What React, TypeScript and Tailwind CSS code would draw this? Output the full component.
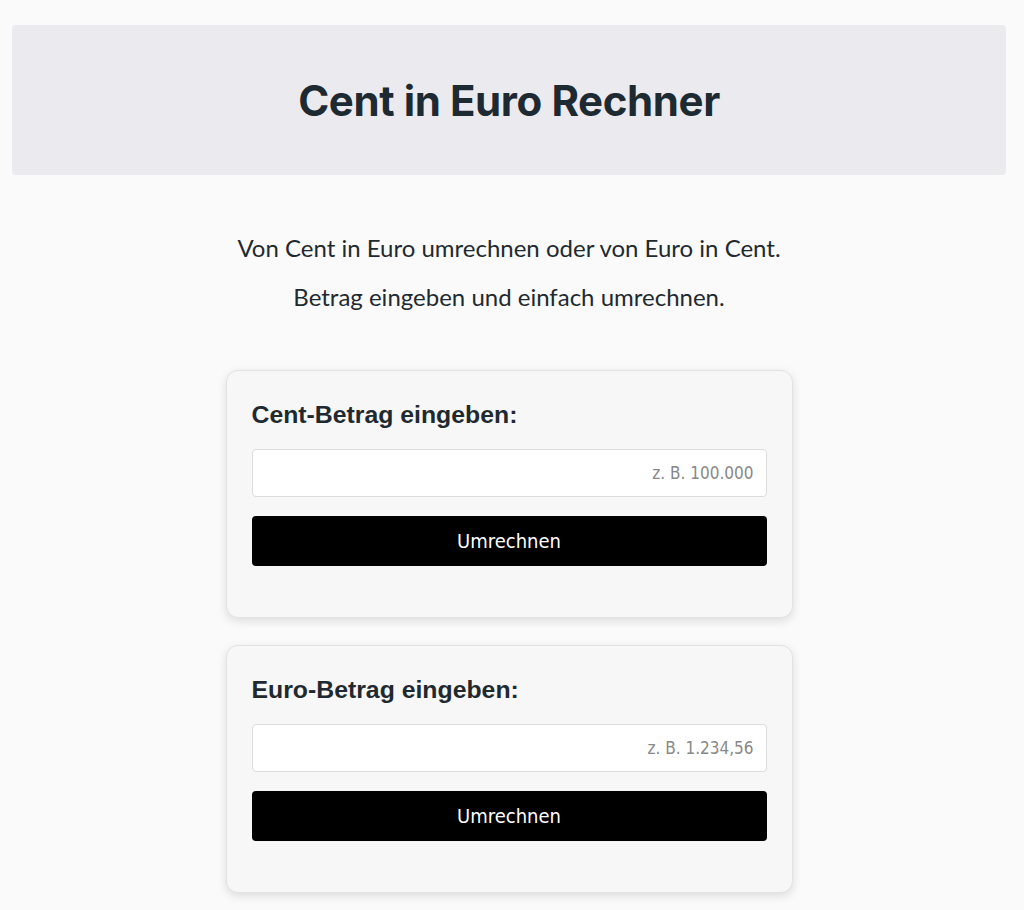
import React, { useState } from "react";

const ConverterCard: React.FC<{
  label: string;
  placeholder: string;
}> = ({ label, placeholder }) => {
  const [value, setValue] = useState("");

  return (
    <div className="w-[567px] rounded-xl border border-[#e2e2e2] bg-[#f7f7f7] px-[25px] pt-[29px] pb-[51px] shadow-[0_3px_10px_rgba(0,0,0,0.12)]">
      <h2 className="font-['Liberation_Sans',Arial,sans-serif] text-[24.8px] font-bold leading-[30px] text-[#1f2a30]">
        {label}
      </h2>
      <input
        type="text"
        value={value}
        onChange={(e) => setValue(e.target.value)}
        placeholder={placeholder}
        className="mt-[19px] block h-[48px] w-full rounded-[4px] border border-[#dcdcdc] bg-white px-3 text-right font-['DejaVu_Sans_Condensed','DejaVu_Sans',Tahoma,sans-serif] text-[17px] text-[#222] placeholder:text-[#888] focus:outline-none"
      />
      <button className="mt-[19px] block h-[50px] w-full rounded-[4px] bg-black font-['DejaVu_Sans_Condensed','DejaVu_Sans',Tahoma,sans-serif] text-[20px] text-white">
        Umrechnen
      </button>
    </div>
  );
};

export default function App() {
  return (
    <div className="min-h-[910px] bg-[#fafafa] pl-3 pr-[18px] pt-[25px] pb-10">
      {/* Header */}
      <div className="flex h-[150px] items-center justify-center rounded-[4px] bg-[#ebeaef]">
        <h1 className="font-['Inter',sans-serif] text-[42px] font-bold tracking-[-0.4px] text-[#1e2a31]">
          Cent in Euro Rechner
        </h1>
      </div>

      {/* Intro */}
      <div className="mt-[57px] text-center font-['Lato','Open_Sans',sans-serif] text-[24px] leading-[32px] text-[#1f2a30]">
        <p>Von Cent in Euro umrechnen oder von Euro in Cent.</p>
        <p className="mt-[17px]">Betrag eingeben und einfach umrechnen.</p>
      </div>

      {/* Cards */}
      <div className="mt-[57px] flex flex-col items-center gap-[27px]">
        <ConverterCard label="Cent-Betrag eingeben:" placeholder="z. B. 100.000" />
        <ConverterCard label="Euro-Betrag eingeben:" placeholder="z. B. 1.234,56" />
      </div>
    </div>
  );
}
